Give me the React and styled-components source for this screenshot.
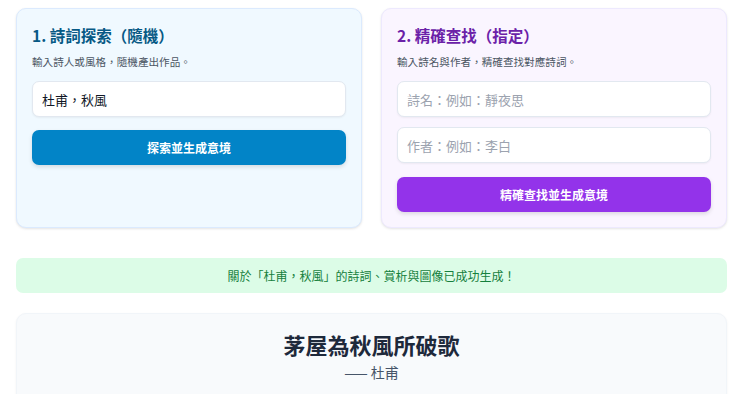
import React from "react";
import styled, { createGlobalStyle } from "styled-components";

const GlobalStyle = createGlobalStyle`
  body {
    margin: 0;
    background: #ffffff;
    font-family: "Noto Sans CJK TC", "Noto Sans", sans-serif;
  }
`;

const Page = styled.div`
  padding: 8px 13px 0 16px;
`;

const Grid = styled.div`
  display: grid;
  grid-template-columns: 1fr 1fr;
  gap: 19px;
`;

const Card = styled.section`
  box-sizing: border-box;
  background: ${(p) => p.bg};
  border: 1px solid ${(p) => p.border};
  border-radius: 10px;
  padding: 15px;
  box-shadow: 0 1px 3px rgba(0, 0, 0, 0.08), 0 1px 2px rgba(0, 0, 0, 0.04);
  display: flex;
  flex-direction: column;
`;

const Title = styled.h2`
  margin: 0;
  font-size: 15.5px;
  line-height: 22px;
  font-weight: 700;
  color: ${(p) => p.color};
`;

const Desc = styled.p`
  margin: 8px 0 11px;
  font-size: 10.6px;
  line-height: 16px;
  color: #4b5563;
`;

const Input = styled.input`
  box-sizing: border-box;
  width: 100%;
  height: 36px;
  padding: 0 9px;
  border: 1px solid #e2e8f0;
  border-radius: 7px;
  background: #fff;
  font-family: inherit;
  font-size: 13px;
  color: #111827;
  box-shadow: 0 1px 2px rgba(0, 0, 0, 0.05);
  outline: none;
  & + & {
    margin-top: 10px;
  }
  &::placeholder {
    color: #9ca3af;
  }
`;

const Button = styled.button`
  margin-top: ${(p) => p.gap || 13}px;
  height: 35px;
  width: 100%;
  border: none;
  border-radius: 7px;
  background: ${(p) => p.bg};
  color: #fff;
  font-family: inherit;
  font-size: 12px;
  font-weight: 700;
  box-shadow: 0 2px 4px rgba(0, 0, 0, 0.12);
  cursor: pointer;
`;

const Banner = styled.div`
  margin-top: 30px;
  height: 35px;
  display: flex;
  align-items: center;
  justify-content: center;
  background: #dcfce7;
  border-radius: 7px;
  color: #15803d;
  font-size: 12px;
`;

const Result = styled.section`
  margin-top: 20px;
  background: #f8fafc;
  border: 1px solid #f1f5f9;
  border-radius: 10px 10px 0 0;
  padding: 14px 16px 40px;
  text-align: center;
  box-shadow: 0 1px 3px rgba(0, 0, 0, 0.05);
`;

const PoemTitle = styled.h1`
  margin: 0;
  font-size: 22px;
  line-height: 32px;
  font-weight: 700;
  color: #1e293b;
`;

const Author = styled.p`
  margin: 2px 0 0;
  font-size: 14px;
  line-height: 20px;
  color: #475569;
`;

export default function App() {
  return (
    <>
      <GlobalStyle />
      <Page>
        <Grid>
          <Card bg="#f0f9ff" border="#dbeafe">
            <Title color="#075985">1. 詩詞探索（隨機）</Title>
            <Desc>輸入詩人或風格，隨機產出作品。</Desc>
            <Input defaultValue="杜甫，秋風" />
            <Button bg="#0284c7">探索並生成意境</Button>
          </Card>
          <Card bg="#faf5ff" border="#ede9fe">
            <Title color="#6b21a8">2. 精確查找（指定）</Title>
            <Desc>輸入詩名與作者，精確查找對應詩詞。</Desc>
            <Input placeholder="詩名：例如：靜夜思" />
            <Input placeholder="作者：例如：李白" />
            <Button bg="#9333ea" gap={14}>精確查找並生成意境</Button>
          </Card>
        </Grid>
        <Banner>關於「杜甫，秋風」的詩詞、賞析與圖像已成功生成！</Banner>
        <Result>
          <PoemTitle>茅屋為秋風所破歌</PoemTitle>
          <Author>—— 杜甫</Author>
        </Result>
      </Page>
    </>
  );
}
